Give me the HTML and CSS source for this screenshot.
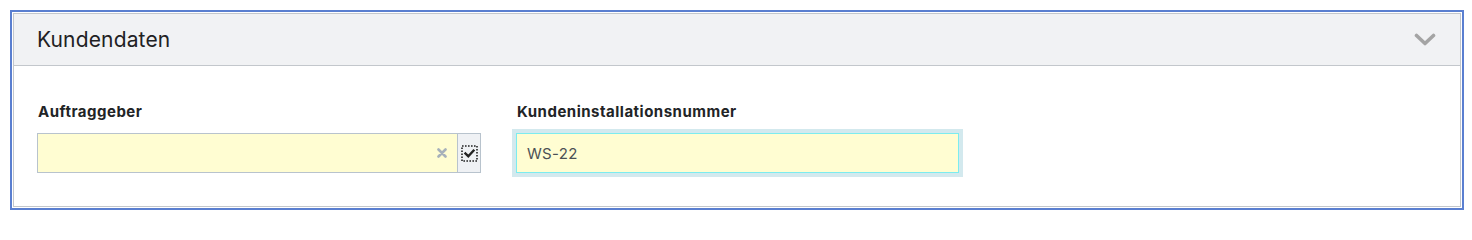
FILE: index.html
```html
<!DOCTYPE html>
<html lang="de">
<head>
<meta charset="utf-8">
<title>Kundendaten</title>
<link rel="stylesheet" href="styles.css">
</head>
<body>
<section class="panel">
  <header class="panel-head">
    <h2 class="panel-title">Kundendaten</h2>
    <svg class="chevron" width="22" height="14" viewBox="0 0 22 14"><path d="M2.5 2.5 L11 10.5 L19.5 2.5" fill="none" stroke="#a4a4a4" stroke-width="3.6" stroke-linecap="round" stroke-linejoin="round"/></svg>
  </header>
  <div class="panel-body">
    <div class="field">
      <label class="field-label">Auftraggeber</label>
      <div class="combo">
        <div class="combo-input">
          <svg class="clear" width="10" height="10" viewBox="0 0 10 10"><path d="M1.5 1.5 L8.5 8.5 M8.5 1.5 L1.5 8.5" stroke="#a7b1ba" stroke-width="2.6" stroke-linecap="round"/></svg>
        </div>
        <div class="combo-btn">
          <svg width="17" height="17" viewBox="0 0 17 17">
            <rect x="1" y="1" width="15" height="15" fill="none" stroke="#222" stroke-width="1.6" stroke-dasharray="1.6 1.4"/>
            <path d="M4.5 8.5 L7.3 11.2 L12.5 5.6" fill="none" stroke="#222" stroke-width="2.4" stroke-linecap="square"/>
          </svg>
        </div>
      </div>
    </div>
    <div class="field">
      <label class="field-label">Kundeninstallationsnummer</label>
      <div class="text-input focused">WS-22</div>
    </div>
  </div>
</section>
</body>
</html>
```
FILE: styles.css
```css
html, body {
  margin: 0;
  padding: 0;
  background: #ffffff;
}
html {
  min-height: 222px;
}
body {
  box-sizing: border-box;
  min-height: 222px;
  padding: 13px 0 15px 13px;
  font-family: Inter, "Noto Sans", "Liberation Sans", sans-serif;
  color: #222426;
}
.panel {
  box-sizing: border-box;
  width: 1448px;
  height: 194px;
  border: 1px solid #c3c7cc;
  outline: 2px solid #5a7fd0;
  outline-offset: 1px;
  background: #fff;
  display: flex;
  flex-direction: column;
}
.panel-head {
  height: 51px;
  background: #f1f2f4;
  border-bottom: 1px solid #c3c7cc;
  display: flex;
  align-items: center;
  justify-content: space-between;
  padding: 0 24px 0 23px;
  flex: none;
}
.panel-title {
  margin: 0;
  font-size: 21px;
  font-weight: 400;
  color: #1f2123;
  letter-spacing: 0.15px;
}
.chevron {
  display: block;
  margin-top: 1px;
}
.panel-body {
  display: flex;
  gap: 35px;
  padding: 36px 0 0 23px;
}
.field {
  width: 444px;
  display: flex;
  flex-direction: column;
}
.field-label {
  font-size: 15px;
  font-weight: 700;
  line-height: 20px;
  margin-bottom: 11px;
  letter-spacing: 0.5px;
  color: #222426;
  padding-left: 1px;
}
.combo {
  display: flex;
  height: 40px;
}
.combo-input {
  box-sizing: border-box;
  flex: 1;
  background: #fffdd2;
  border: 1px solid #b8c3cd;
  border-right: none;
  display: flex;
  align-items: center;
  justify-content: flex-end;
  padding-right: 10px;
}
.clear {
  display: block;
}
.combo-btn {
  box-sizing: border-box;
  width: 24px;
  background: #eff1f4;
  border: 1px solid #b8c3cd;
  display: flex;
  align-items: center;
  justify-content: center;
}
.combo-btn svg {
  display: block;
}
.text-input {
  box-sizing: border-box;
  width: 443px;
  height: 40px;
  background: #fffdd2;
  border: 1px solid #7cecef;
  display: flex;
  align-items: center;
  padding-left: 10px;
  font-size: 15px;
  color: #4b5055;
  letter-spacing: 0.3px;
}
.text-input.focused {
  box-shadow: 0 0 0 4px #d3e9ee;
}
```
